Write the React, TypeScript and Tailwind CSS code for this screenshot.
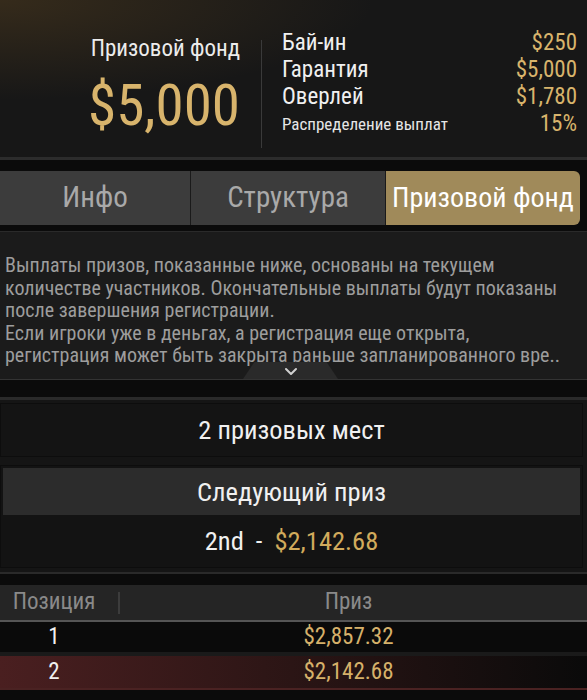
export default function App() {
  const font = { fontFamily: "'Roboto Condensed', Roboto, 'Liberation Sans', sans-serif" };
  const stats: [string, string, boolean][] = [
    ["Бай-ин", "$250", false],
    ["Гарантия", "$5,000", false],
    ["Оверлей", "$1,780", false],
    ["Распределение выплат", "15%", true],
  ];
  return (
    <div style={font} className="w-[587px] h-[700px] bg-[#0b0b0b] overflow-hidden text-white">
      {/* Header */}
      <div className="h-[157px] bg-[radial-gradient(ellipse_at_0%_0%,rgba(110,80,35,0.35),rgba(23,23,23,0)_45%)] bg-[#171717] flex">
        <div className="w-[240px] flex flex-col items-end pt-[35px]">
          <div className="text-[23px] leading-[28px] text-[#ececec]">Призовой фонд</div>
          <div className="mt-[13px] text-[57px] leading-[60px] text-[#d8b46c]">$5,000</div>
        </div>
        <div className="ml-[21px] mt-[40px] w-px h-[108px] bg-[#3a3a3a]" />
        <div className="ml-[20px] flex-1 pr-[10px] pt-[30px]">
          {stats.map(([l, v, small]) => (
            <div key={l} className="flex justify-between items-center h-[27px]">
              <span className={small ? "text-[17px] text-[#e6e6e6]" : "text-[23px] text-[#f0f0f0]"}>{l}</span>
              <span className="text-[23px] text-[#d8b46c]">{v}</span>
            </div>
          ))}
        </div>
      </div>
      <div className="h-[3px] bg-[#2c2c2c]" />
      <div className="h-[11px] bg-[#0b0b0b]" />
      {/* Tabs */}
      <div className="flex h-[54px] pr-[7px]">
        <div className="w-[190px] bg-[#3c3c3c] flex items-center justify-center text-[29px] text-[#a9a9a9]">Инфо</div>
        <div className="w-px bg-[#1a1a1a]" />
        <div className="w-[194px] bg-[#3c3c3c] flex items-center justify-center text-[29px] text-[#a9a9a9]">Структура</div>
        <div className="w-px bg-[#1a1a1a]" />
        <div className="flex-1 bg-[#a08a5a] rounded-r-[6px] flex items-center justify-center text-[28px] text-white whitespace-nowrap">Призовой фонд</div>
      </div>
      <div className="h-[6px] bg-[#0b0b0b]" />
      {/* Description */}
      <div className="relative border-t border-[#2a2a2a] bg-[#1b1b1b] h-[148px] pt-[22px] px-[5px]">
        <p className="max-w-[565px] text-[20px] leading-[22.5px] text-[#9d9d9d]">
          Выплаты призов, показанные ниже, основаны на текущем количестве участников. Окончательные выплаты будут показаны после завершения регистрации.
          <br />
          Если игроки уже в деньгах, а регистрация еще открыта, регистрация может быть закрыта раньше запланированного вре..
        </p>
        <div className="absolute left-[243px] bottom-0 w-[95px] h-[17px] bg-[#2a2a2a] [clip-path:polygon(12%_0,88%_0,100%_100%,0_100%)] flex items-center justify-center">
          <svg width="14" height="9" viewBox="0 0 14 9" className="mt-[2px]">
            <path d="M2 2 L7 7 L12 2" stroke="#d0d0d0" strokeWidth="2" fill="none" strokeLinecap="round" strokeLinejoin="round" />
          </svg>
        </div>
      </div>
      <div className="h-px bg-[#333333]" />
      <div className="h-[17px] bg-[#0b0b0b]" />
      {/* Summary */}
      <div className="border-t-[3px] border-[#2a2a2a] bg-[#151515] pt-[3px] pb-[4px] pr-[4px]">
        <div className="h-[54px] bg-[#141414] border border-[#0d0d0d] flex items-center justify-center text-[26.5px] text-[#f0f0f0]">
          2 призовых мест
        </div>
        <div className="mt-[8px] border border-[#0d0d0d] bg-[#131313] p-[2px] pb-0">
          <div className="h-[47px] bg-[#2c2c2c] flex items-center justify-center text-[26.5px] text-[#f0f0f0]">Следующий приз</div>
          <div className="h-[52px] flex items-center justify-center text-[26.5px]">
            <span className="text-[#f0f0f0]">2nd</span>
            <span className="mx-[12px] text-[#f0f0f0]">-</span>
            <span className="text-[#d1ab5c]">$2,142.68</span>
          </div>
        </div>
      </div>
      <div className="h-[2px] bg-[#2a2a2a]" />
      <div className="h-[11px] bg-[#0b0b0b]" />
      {/* Table */}
      <div className="h-[37px] bg-[#252525] flex items-center border-b-2 border-[#555555]">
        <div className="w-[108px] text-center text-[23px] text-[#8a8a8a]">Позиция</div>
        <div className="ml-[10px] w-[2px] h-[22px] bg-[#3c3c3c]" />
        <div className="flex-1 text-center text-[23px] text-[#8a8a8a] pr-[10px]">Приз</div>
      </div>
      <div className="h-[34px] bg-[#0a0a0a] flex items-center border-b-[4px] border-[#1a1a1a]">
        <div className="w-[108px] text-center text-[23px] text-[#f0f0f0]">1</div>
        <div className="flex-1 text-center text-[23px] text-[#d6b16a] pl-[12px] pr-[10px]">$2,857.32</div>
      </div>
      <div className="h-[34px] bg-[linear-gradient(90deg,#4a1f20_0%,#2e1616_45%,#0a0a0a_100%)] flex items-center border-b-2 border-[#4a2222]">
        <div className="w-[108px] text-center text-[23px] text-[#f0f0f0]">2</div>
        <div className="flex-1 text-center text-[23px] text-[#d6b16a] pl-[12px] pr-[10px]">$2,142.68</div>
      </div>
    </div>
  );
}
